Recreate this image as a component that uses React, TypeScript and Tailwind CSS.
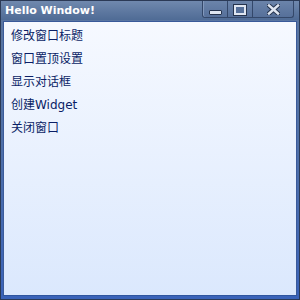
const items = ["修改窗口标题", "窗口置顶设置", "显示对话框", "创建Widget", "关闭窗口"];

function TitleButtons() {
  return (
    <div className="flex self-start h-[17px] mr-[5px] rounded-b-[3px] border border-t-0 border-[#34486a] bg-gradient-to-b from-[#6b84aa] to-[#56709a] shadow-[inset_1px_0_0_#8298bb]">
      {/* Minimize */}
      <div className="w-[25px] flex items-center justify-center border-r border-[#34486a]">
        <div className="w-[13px] h-[5px] mt-[6px] bg-[#dfe6f1] border border-[#26344e] rounded-[1px]" />
      </div>
      {/* Maximize */}
      <div className="w-[25px] flex items-center justify-center border-r border-[#34486a]">
        <div className="w-[12px] h-[10px] mt-[1px] border-[2px] border-[#dfe6f1] outline outline-1 outline-[#26344e] bg-[#56709a]" />
      </div>
      {/* Close */}
      <div className="w-[40px] flex items-center justify-center">
        <svg width="13" height="11" viewBox="0 0 13 11" className="mt-[1px]">
          <path d="M2 1.5 L11 9.5 M11 1.5 L2 9.5" stroke="#26344e" strokeWidth="4.5" strokeLinecap="square" />
          <path d="M2 1.5 L11 9.5 M11 1.5 L2 9.5" stroke="#dfe6f1" strokeWidth="2.5" strokeLinecap="square" />
        </svg>
      </div>
    </div>
  );
}

export default function App() {
  return (
    <div className="w-[300px] h-[300px] flex flex-col border border-[#2b3a56] bg-gradient-to-b from-[#5b76a0] via-[#4e6fa8] to-[#3a63b9]">
      {/* Title bar */}
      <div className="h-[20px] flex items-stretch bg-gradient-to-b from-[#7089ae] to-[#4f6b95] -mx-px -mt-px border-t border-x border-[#2b3a56]">
        <div
          className="flex-1 pl-[4px] pt-[3px] text-white font-bold text-[11px] leading-[14px]"
          style={{ fontFamily: "'DejaVu Sans', Verdana, sans-serif" }}
        >
          Hello Window!
        </div>
        <TitleButtons />
      </div>
      {/* Client area */}
      <div className="flex-1 mx-[2px] mb-[3px] mt-px border border-[#3a5a9a] border-b-[#2f559f] bg-gradient-to-b from-[#f6f9ff] to-[#dbe8fd] pt-[3px] pl-[7px]">
        {items.map((t) => (
          <div
            key={t}
            className="h-[23px] leading-[23px] text-[12px] text-[#0a1e66]"
            style={{ fontFamily: "'DejaVu Sans', 'Noto Sans CJK SC', sans-serif" }}
          >
            {t}
          </div>
        ))}
      </div>
    </div>
  );
}
